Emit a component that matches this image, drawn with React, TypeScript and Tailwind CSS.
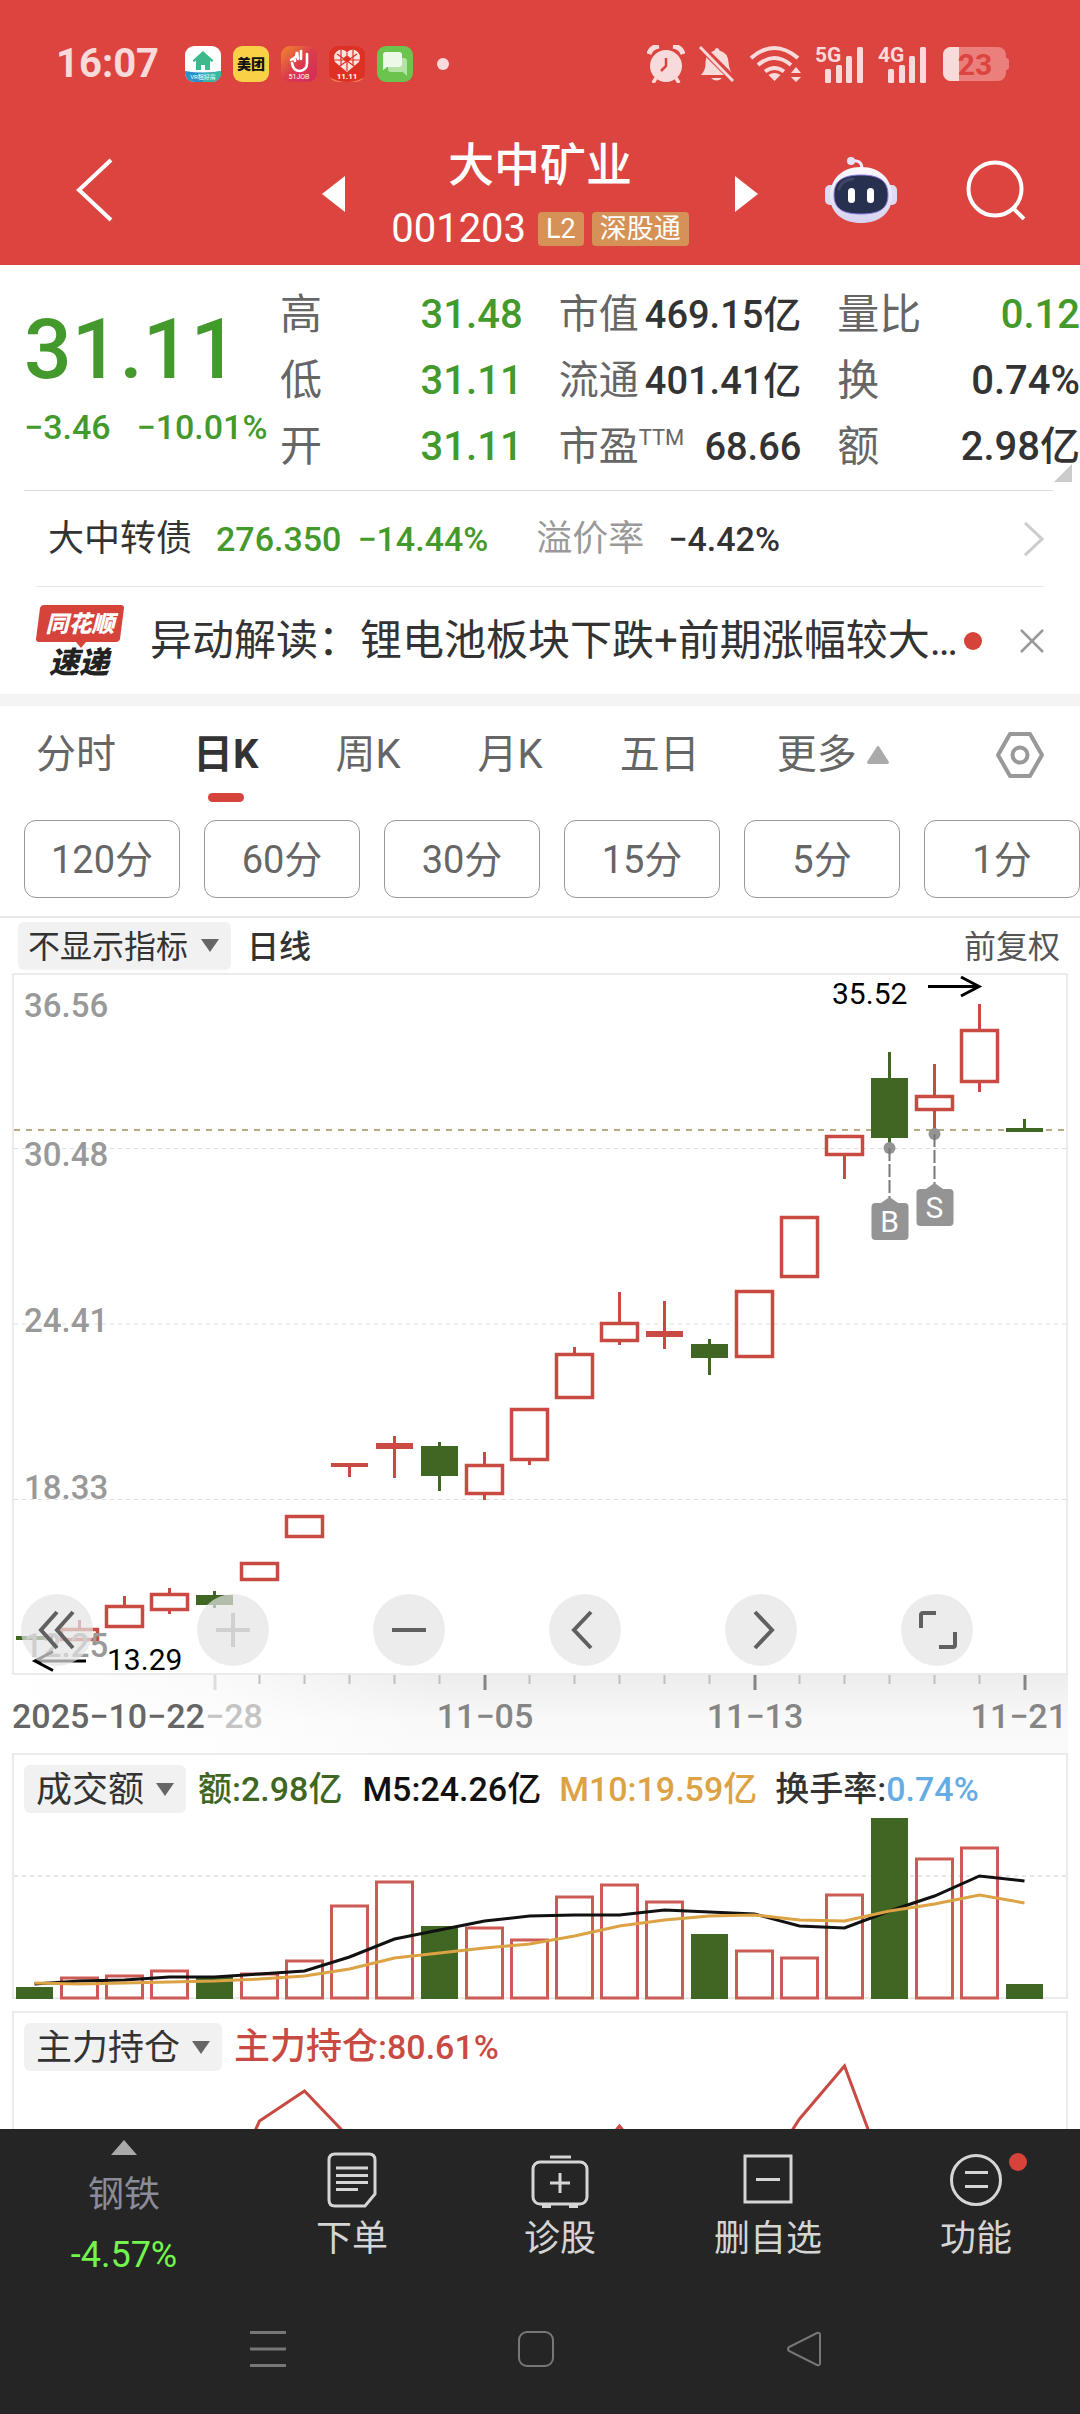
import { ReactNode } from "react";

interface Candle {
  high: number;
  top: number;
  bottom: number;
  low: number;
  up: boolean;
}

const RED = "#c94a42";
const GREEN = "#3f6623";

const STEP = 45;
const centerOf = (i: number) => 22.5 + i * STEP;

// [high, top, bottom, low, up]
const rawCandles: [number, number, number, number, boolean][] = [
  [663, 663, 667, 667, false],
  [647, 655, 668, 668, true],
  [623, 632, 655, 655, true],
  [615, 620, 638, 641, true],
  [618, 622, 632, 635, false],
  [589, 589, 608, 608, true],
  [542, 542, 565, 565, true],
  [490, 490, 494, 504, true],
  [463, 470, 476, 505, true],
  [469, 473, 503, 518, false],
  [479, 491, 522, 527, true],
  [435, 435, 488, 492, true],
  [374, 380, 426, 426, true],
  [319, 349, 369, 372, true],
  [328, 358, 364, 376, true],
  [366, 371, 385, 402, false],
  [317, 317, 385, 385, true],
  [243, 243, 305, 305, true],
  [162, 162, 183, 206, true],
  [79, 105, 165, 174, false],
  [91, 122, 138, 161, true],
  [31, 56, 110, 119, true],
  [146, 155, 159, 159, false],
];

const candles: Candle[] = rawCandles.map(([high, top, bottom, low, up]) => ({ high, top, bottom, low, up }));

const volumeTops = [174, 164, 162, 157, 164, 160, 147, 92, 68, 113, 114, 126, 83, 71, 88, 121, 137, 144, 81, 5, 45, 34, 171];
const ma5 = [171, 168, 167, 164, 164, 161, 158, 144, 126, 117, 108, 103, 102, 102, 97, 99, 101, 113, 115, 98, 83, 63, 68];
const ma10 = [170, 171, 170, 169, 168, 166, 163, 156, 145, 140, 135, 131, 123, 113, 107, 103, 102, 107, 108, 98, 91, 82, 90];
const holding = [160, 160, 160, 160, 150, 50, 20, 67, 110, 130, 140, 130, 110, 55, 110, 140, 117, 48, -5, 116, 140, 150, 150];

const toPoints = (values: number[]) => values.map((v, i) => `${centerOf(i)},${v}`).join(" ");

const priceLabels = [
  { text: "36.56", y: 44 },
  { text: "30.48", y: 193 },
  { text: "24.41", y: 359 },
  { text: "18.33", y: 526 },
  { text: "12.25", y: 684 },
];

const periods = ["120分", "60分", "30分", "15分", "5分", "1分"];

/* Status bar */

const SignalBars = ({ label }: { label: string }) => (
  <svg viewBox="0 0 48 38" className="w-12 h-[38px] overflow-visible" fill="#f8dada">
    <text x="0" y="17" fontSize="21" fontWeight="700">{label}</text>
    <rect x="10" y="24" width="6" height="14" rx="1.5" />
    <rect x="21" y="20" width="6" height="18" rx="1.5" />
    <rect x="31" y="11" width="6" height="27" rx="1.5" />
    <rect x="42" y="2" width="6" height="36" rx="1.5" />
  </svg>
);

const StatusBar = () => (
  <div className="flex h-[128px] items-center pl-14 pr-[71px] text-[#f8dada]">
    <span className="text-[40px] font-bold">16:07</span>
    <div className="ml-[26px] flex items-center gap-3">
      <svg viewBox="0 0 36 36" className="size-9 overflow-visible">
        <clipPath id="house"><rect width="36" height="36" rx="9" /></clipPath>
        <g clipPath="url(#house)">
          <rect width="36" height="36" fill="#fff" />
          <path d="M0 25q18 3 36 0v11H0z" fill="#2f8fc4" />
          <path d="M18 27q10 0 18-2v11H18z" fill="#37b8a5" />
          <path d="M18 5 7.500 14.500l1.500 1.500 2-1.500V24h14v-9.500l2 1.500 1.500-1.500z" fill="#3dba8c" />
          <path d="M16 19h4v5h-4z" fill="#fff" />
        </g>
        <text x="18" y="33" fontSize="6" fill="#fff" textAnchor="middle">VR租好房</text>
      </svg>
      <svg viewBox="0 0 36 36" className="size-9 overflow-visible">
        <rect width="36" height="36" rx="9" fill="#f8d147" />
        <text x="18" y="23" fontSize="14" fontWeight="900" fill="#111" textAnchor="middle">美团</text>
      </svg>
      <svg viewBox="0 0 36 36" className="size-9 overflow-visible">
        <linearGradient id="job" x1="0" y1="0" x2="1" y2="1">
          <stop offset="0" stopColor="#f08a2c" />
          <stop offset=".5" stopColor="#dc3c4c" />
          <stop offset="1" stopColor="#d02c5c" />
        </linearGradient>
        <rect width="36" height="36" rx="9" fill="url(#job)" />
        <path d="M11 17q1 8 8 8 7-1 7-8V8M10 14l3-2 1 3M15 11l1-5 1 7M20 5v8" fill="none" stroke="#fff" strokeWidth="2.600" strokeLinecap="round" />
        <text x="18" y="33" fontSize="7" fill="#fff" textAnchor="middle">51JOB</text>
      </svg>
      <svg viewBox="0 0 36 36" className="size-9 overflow-visible">
        <clipPath id="heart"><rect width="36" height="36" rx="9" /></clipPath>
        <g clipPath="url(#heart)">
          <rect width="36" height="36" fill="#de3024" />
          <path d="M0 31q18 10 36 0v5H0z" fill="#f08050" />
          <path d="M18 26 6 16Q3 7 10 4q6-1 8 3 2-4 8-3 7 3 4 12z" fill="#fbe4e0" />
          <path d="m8 8 20 14M28 8 8 22M18 7v18M6 14h24M12 4v16M24 4v16" stroke="#de3024" strokeWidth="1.200" />
          <circle cx="18" cy="13" r="3" fill="#de3024" />
        </g>
        <text x="18" y="33" fontSize="8" fontWeight="700" fill="#fff" textAnchor="middle">11.11</text>
      </svg>
      <svg viewBox="0 0 36 36" className="size-9">
        <rect width="36" height="36" rx="9" fill="#6cc44f" />
        <path d="M14 12h13q3 0 3 3v15l-4-4H14q-3 0-3-3v-8q0-3 3-3z" fill="#b5e2a5" />
        <path d="M9 6h13q3 0 3 3v9q0 3-3 3H10l-4 3V9q0-3 3-3z" fill="#edf9e8" />
      </svg>
    </div>
    <span className="ml-6 size-3 rounded-full bg-[#f8dada]" />
    <div className="ml-auto flex items-center">
      <svg viewBox="0 0 38 38" className="size-[38px]">
        <circle cx="19" cy="21" r="16" fill="#f8dada" />
        <path d="M2 9q2-7 10-8M36 9q-2-7-10-8" stroke="#f8dada" strokeWidth="5" fill="none" />
        <path d="m9 33-3 5M29 33l3 5" stroke="#f8dada" strokeWidth="3.500" />
        <path d="M19 13v8l-5 5" stroke="#dc4440" strokeWidth="2.500" fill="none" />
      </svg>
      <svg viewBox="0 0 36 38" className="ml-3.5 h-[38px] w-9">
        <path d="M18 3q2 0 2.500 2.500Q29 8 29.500 17q.5 8 4.500 13H2q5-5 4.500-13Q7 8 15.500 5.500 16 3 18 3z" fill="#f8dada" />
        <path d="M12 33h11q-5.500 5-11 0z" fill="#f8dada" />
        <path d="M0 0 37 37" stroke="#dc4440" strokeWidth="7" />
        <path d="m1 2 33 34" stroke="#f8dada" strokeWidth="3" />
      </svg>
      <svg viewBox="0 0 54 38" className="ml-3.5 h-[38px] w-[54px]" fill="none" stroke="#f8dada" strokeWidth="4">
        <path d="M2 13q23-20 47 0M9 20q16.500-14 33 0M16 26.500q9.500-7 19 0" />
        <path d="m25.500 36-6-6q6-4 12 0z" fill="#f8dada" stroke="none" />
        <path d="m47 22 5 6H42zM47 37l5-5H42z" fill="#f8dada" stroke="none" />
      </svg>
      <div className="ml-3 flex gap-[15px]">
        <SignalBars label="5G" />
        <SignalBars label="4G" />
      </div>
      <svg viewBox="0 0 66 34" className="ml-[17px] h-[34px] w-[66px] overflow-visible">
        <clipPath id="battery"><rect width="63" height="34" rx="8" /></clipPath>
        <g clipPath="url(#battery)">
          <rect width="63" height="34" fill="#ea7f7c" />
          <rect width="16" height="34" fill="#f8dada" />
        </g>
        <path d="M63 11q3 0 3 3v6q0 3-3 3z" fill="#ea7f7c" />
        <text x="32" y="28" fontSize="30" fontWeight="700" fill="#dc4440" textAnchor="middle">23</text>
      </svg>
    </div>
  </div>
);

/* Title */

const TitleBar = () => (
  <div className="grid h-[137px] grid-cols-[1fr_436px_1fr] items-center pb-[5px]">
    <div className="pb-2 pl-[76px]">
      <button aria-label="返回" className="block">
        <svg viewBox="0 0 37 64" className="h-16 w-[37px]" fill="none" stroke="#fff" strokeWidth="4">
          <path d="M35 2 3 32l32 30" />
        </svg>
      </button>
    </div>
    <div className="flex items-center justify-between">
      <button aria-label="上一只">
        <svg viewBox="0 0 23 36" className="h-9 w-[23px]"><path d="M23 0v36L0 18z" fill="#fff" /></svg>
      </button>
      <div className="flex flex-col items-center gap-6">
        <h1 className="text-[46px] font-medium">大中矿业</h1>
        <div className="flex h-[34px] items-center">
          <span className="text-[40px]">001203</span>
          <span className="ml-3 flex h-[34px] items-center rounded-sm bg-[#d69256] px-2 text-[27px]">L2</span>
          <span className="ml-2 flex h-[34px] items-center rounded-sm bg-[#d69256] px-2 text-[27px]">深股通</span>
        </div>
      </div>
      <button aria-label="下一只">
        <svg viewBox="0 0 23 36" className="h-9 w-[23px]"><path d="M0 0v36l23-18z" fill="#fff" /></svg>
      </button>
    </div>
    <div className="flex items-center justify-between pb-2 pl-[67px] pr-[54px]">
      <button aria-label="助手">
        <svg viewBox="0 0 72 68" className="h-[68px] w-[72px]">
          <linearGradient id="shell" x1="0" y1="0" x2="0" y2="1">
            <stop offset="0" stopColor="#fbfaff" />
            <stop offset="1" stopColor="#d6d2f0" />
          </linearGradient>
          <path d="M26 5q11-2 11 8" fill="none" stroke="#ece9fa" strokeWidth="3" />
          <circle cx="26" cy="5" r="4" fill="#e6e3f6" />
          <rect x="0" y="29" width="12" height="20" rx="5" fill="#dedaf4" />
          <rect x="60" y="29" width="12" height="20" rx="5" fill="#dedaf4" />
          <path d="M36 11c20 0 31 13 31 29 0 17-13 27-31 27S5 57 5 40c0-16 11-29 31-29z" fill="url(#shell)" />
          <path d="M36 19c20 0 27 7 27 20 0 14-9 19-27 19S9 53 9 39c0-13 7-20 27-20z" fill="#28304f" stroke="#8f7be0" strokeWidth="1" />
          <path d="M14 33q2-9 14-10" fill="none" stroke="#3e4668" strokeWidth="3" strokeLinecap="round" />
          <rect x="23" y="32" width="7" height="15" rx="3.500" fill="#fff" />
          <rect x="42" y="32" width="7" height="15" rx="3.500" fill="#fff" />
        </svg>
      </button>
      <button aria-label="搜索">
        <svg viewBox="0 0 60 60" className="size-[60px]" fill="none" stroke="#fff" strokeWidth="4">
          <circle cx="29" cy="29" r="26.500" />
          <path d="m46 47 12 12" />
        </svg>
      </button>
    </div>
  </div>
);

/* Quote */

interface QuoteItemProps {
  label: ReactNode;
  value: string;
  labelClass?: string;
  valueClass?: string;
}

const QuoteItem = ({ label, value, labelClass = "text-[42px]", valueClass = "text-[40px] text-[#333]" }: QuoteItemProps) => (
  <div className="flex h-[66px] items-center justify-between whitespace-nowrap">
    <dt className={`flex text-[#666] ${labelClass}`}>{label}</dt>
    <dd className={`font-medium ${valueClass}`}>{value}</dd>
  </div>
);

const Quote = () => {
  const green = "text-[40px] text-[#43992b]";
  const mid = "text-[38px] text-[#333]";
  return (
    <section className="relative flex pb-2.5 pt-[17px]">
      <div className="w-[280px] shrink-0 pl-6 pt-[26px] font-medium text-[#43992b]">
        <div className="text-[84px]">31.11</div>
        <div className="mt-[18px] flex gap-[26px] whitespace-nowrap text-[34px]">
          <span>−3.46</span>
          <span>−10.01%</span>
        </div>
      </div>
      <dl className="grid flex-1 grid-flow-col grid-cols-3 grid-rows-3 gap-x-9">
        <QuoteItem label="高" value="31.48" valueClass={green} />
        <QuoteItem label="低" value="31.11" valueClass={green} />
        <QuoteItem label="开" value="31.11" valueClass={green} />
        <QuoteItem label="市值" value="469.15亿" labelClass="text-[40px]" valueClass={mid} />
        <QuoteItem label="流通" value="401.41亿" labelClass="text-[40px]" valueClass={mid} />
        <QuoteItem label={<>市盈<span className="text-[22px]">TTM</span></>} value="68.66" labelClass="text-[40px]" valueClass={mid} />
        <QuoteItem label="量比" value="0.12" valueClass={green} />
        <QuoteItem label="换" value="0.74%" />
        <QuoteItem label="额" value="2.98亿" />
      </dl>
      <svg viewBox="0 0 18 18" className="absolute bottom-2 right-2 size-[18px]"><path d="M18 0v18H0z" fill="#ccc" /></svg>
    </section>
  );
};

const BondRow = () => (
  <a href="#bond" className="mx-9 flex h-24 items-center border-b border-[#e8e8e8] pl-3 text-[#333]">
    <span className="text-[36px]">大中转债</span>
    <span className="ml-6 text-[34px] font-medium text-[#43992b]">276.350</span>
    <span className="ml-4 text-[34px] font-medium text-[#43992b]">−14.44%</span>
    <span className="ml-12 text-[36px] text-[#999]">溢价率</span>
    <span className="ml-6 text-[34px] font-medium">−4.42%</span>
    <svg viewBox="0 0 21 34" className="ml-auto h-[34px] w-[21px]" fill="none" stroke="#ccc" strokeWidth="3">
      <path d="m2 1 17 16L2 33" />
    </svg>
  </a>
);

const NewsRow = () => (
  <div className="mx-9 flex h-[107px] items-center whitespace-nowrap text-[#333]">
    <svg viewBox="0 0 88 72" className="h-[72px] w-[88px] shrink-0 overflow-visible">
      <path d="M8 0h77q3 0 3 3l-4 31q-1 3-4 3H50l-5 6-5-6H3q-3 0-3-3L4 3q1-3 4-3z" fill="#d5433b" />
      <text x="44" y="27" fontSize="23" fontWeight="900" fontStyle="italic" fill="#fff" textAnchor="middle">同花顺</text>
      <text x="43" y="68" fontSize="30" fontWeight="900" fontStyle="italic" fill="#222" textAnchor="middle">速递</text>
    </svg>
    <a href="#news" className="ml-[26px] text-[42px]">异动解读：锂电池板块下跌+前期涨幅较大…</a>
    <span className="ml-1.5 size-[18px] shrink-0 rounded-full bg-[#d5433b]" />
    <button aria-label="关闭" className="ml-auto">
      <svg viewBox="0 0 24 24" className="size-6" stroke="#999" strokeWidth="2.500"><path d="m1 1 22 22M23 1 1 23" /></svg>
    </button>
  </div>
);

/* Period tabs */

const tabs = ["分时", "日K", "周K", "月K", "五日"];

const PeriodTabs = () => (
  <nav className="border-t-[12px] border-[#f4f4f4]">
    <div className="flex gap-[77px] px-9 text-[40px] text-[#666]">
      {tabs.map((tab) => (
        <button key={tab} className={`relative h-[98px] ${tab === "日K" ? "font-bold text-[#333]" : ""}`}>
          {tab}
          {tab === "日K" && (
            <span className="absolute bottom-0.5 left-1/2 h-[9px] w-9 -translate-x-1/2 rounded-full bg-[#d5433b]" />
          )}
        </button>
      ))}
      <button className="flex h-[98px] items-center gap-2.5">
        更多
        <svg viewBox="0 0 22 18" className="h-[18px] w-[22px]"><path d="M11 0q1 0 2 2l9 14q0 2-2 2H2q-2 0-2-2L9 2q1-2 2-2z" fill="#aaa" /></svg>
      </button>
      <button aria-label="设置" className="ml-auto">
        <svg viewBox="0 0 48 46" className="h-[46px] w-12" fill="none" stroke="#999" strokeWidth="4" strokeLinejoin="round">
          <path d="M14 2h20l12 21-12 21H14L2 23z" />
          <circle cx="24" cy="23" r="7.500" />
        </svg>
      </button>
    </div>
    <div className="flex gap-6 border-b-2 border-[#e8e8e8] pb-[18px] pl-6 pt-4">
      {periods.map((p) => (
        <button key={p} className="h-[78px] flex-1 rounded-xl border border-[#999] pt-0.5 text-[38px] text-[#666]">{p}</button>
      ))}
    </div>
  </nav>
);

/* Charts */

interface PickerProps {
  id: string;
  label: string;
  value: string;
  className: string;
}

const Picker = ({ id, label, value, className }: PickerProps) => (
  <div className="relative flex h-12 items-center rounded-md bg-[#f1f1f1]">
    <label htmlFor={id} className="sr-only">{label}</label>
    <select id={id} className={`h-12 appearance-none pt-0.5 text-[#333] outline-none ${className}`}>
      <option>{value}</option>
    </select>
    <svg viewBox="0 0 18 13" className="pointer-events-none absolute right-3 h-[13px] w-[18px]"><path d="M0 0h18L9 13z" fill="#666" /></svg>
  </div>
);

const CandleShape = ({ candle, index }: { candle: Candle; index: number }) => {
  const { high, top, bottom, low, up } = candle;
  const cx = centerOf(index);
  const color = up ? RED : GREEN;
  const solid = !up || bottom - top < 8;
  return (
    <g stroke={color} strokeWidth="3">
      {high < top && <line x1={cx} x2={cx} y1={high} y2={top} />}
      {low > bottom && <line x1={cx} x2={cx} y1={bottom} y2={low} />}
      {solid ? (
        <rect x={cx - 18.5} y={top} width="37" height={bottom - top} fill={color} stroke="none" />
      ) : (
        <rect x={cx - 18} y={top + 1.5} width="36" height={bottom - top - 3} fill="none" strokeWidth="3.5" />
      )}
    </g>
  );
};

const TradeMark = ({ x, from, label }: { x: number; from: number; label: string }) => (
  <g>
    <circle cx={x} cy={from} r="6" fill="#949494" />
    <line x1={x} x2={x} y1={from} y2={from + 50} stroke="#777" strokeWidth="2" strokeDasharray="13 3" />
    <path d={`M${x - 10} ${from + 56}l10-7 10 7z`} fill="#949494" />
    <rect x={x - 18} y={from + 55} width="37" height="37" rx="4" fill="#949494" />
    <text x={x} y={from + 84} fontSize="30" fill="#fff" textAnchor="middle">{label}</text>
  </g>
);

const ToolButton = ({ label, dim, children }: { label: string; dim?: boolean; children: ReactNode }) => (
  <button aria-label={label} className="flex size-[72px] items-center justify-center rounded-full bg-[#e4e4e4]/70">
    <svg viewBox="0 0 40 40" className="size-10" fill="none" stroke={dim ? "#d0d0d0" : "#606060"} strokeWidth="4">
      {children}
    </svg>
  </button>
);

const KLineChart = () => (
  <div className="relative mx-3 border-2 border-[#ebebeb]">
    <svg viewBox="2 2 1052 698" className="block w-full overflow-visible">
      <g strokeDasharray="4 4" stroke="#dedede" strokeWidth="1">
        <line x1="2" x2="1054" y1="175.500" y2="175.500" />
        <line x1="2" x2="1054" y1="351" y2="351" />
        <line x1="2" x2="1054" y1="526.500" y2="526.500" />
      </g>
      <line x1="2" x2="1052" y1="157" y2="157" stroke="#b9aa80" strokeWidth="2" strokeDasharray="6 6" />
      {candles.map((c, i) => (
        <CandleShape key={i} candle={c} index={i} />
      ))}
      {priceLabels.map((l) => (
        <text key={l.text} x="12" y={l.y} fontSize="33" fontWeight="500" fill="#999">{l.text}</text>
      ))}
      <TradeMark x={centerOf(19)} from={175} label="B" />
      <TradeMark x={centerOf(20)} from={161} label="S" />
      <text x="820" y="31" fontSize="30">35.52</text>
      <text x="95" y="697" fontSize="30">13.29</text>
      <g fill="none" stroke="#000" strokeWidth="3">
        <path d="M916 13.500h51M949 4l18 9.500-18 9.500" />
        <path d="M74 688H23M41 678.500 23 688l18 9.500" />
      </g>
    </svg>
    <div className="absolute inset-x-0 bottom-[7px] flex justify-between pl-[7px] pr-[93px]">
      <ToolButton label="最早"><path d="M20 2 4 20l16 18M36 2 20 20l16 18" /></ToolButton>
      <ToolButton label="放大" dim><path d="M3 20h34M20 3v34" /></ToolButton>
      <ToolButton label="缩小"><path d="M3 20h34" /></ToolButton>
      <ToolButton label="左移"><path d="M26 2 9 20l17 18" /></ToolButton>
      <ToolButton label="右移"><path d="m14 2 17 18-17 18" /></ToolButton>
      <ToolButton label="全屏"><path d="M4 18V5q0-2 2-2h13M38 22v13q0 2-2 2H22" /></ToolButton>
    </div>
  </div>
);

const TimeAxis = () => (
  <svg viewBox="0 0 1056 78" className="mx-3 block w-[calc(100%-24px)]" fontSize="34" fontWeight="500" fill="#858585">
    <linearGradient id="axis-down" x1="0" y1="0" x2="0" y2="1">
      <stop offset="0" stopColor="#ededed" />
      <stop offset=".6" stopColor="#f9f9f9" />
      <stop offset="1" stopColor="#fafafa" />
    </linearGradient>
    <linearGradient id="axis-left">
      <stop offset="0" stopColor="#fff" />
      <stop offset=".5" stopColor="#fff" stopOpacity=".7" />
      <stop offset="1" stopColor="#fff" stopOpacity="0" />
    </linearGradient>
    <rect width="1056" height="78" fill="url(#axis-down)" />
    <rect width="420" height="78" fill="url(#axis-left)" />
    {candles.map((_, i) => {
      if (i < 4) return null;
      const major = i % 6 === 4;
      const color = i === 4 ? "#ddd" : major ? "#858585" : "#c0c0c0";
      return <rect key={i} x={centerOf(i) - 1} y="0" width={major ? 3 : 2} height={major ? 15 : 9} fill={color} />;
    })}
    <text x="0" y="53" fill="#666">2025−10−22</text>
    <text x="193" y="53" fill="#c4c4c4">−28</text>
    <text x="473" y="53" textAnchor="middle">11−05</text>
    <text x="743" y="53" textAnchor="middle">11−13</text>
    <text x="1055" y="53" textAnchor="end">11−21</text>
  </svg>
);

const VolumeChart = () => (
  <section className="mx-3 border-2 border-[#ebebeb] pt-2.5">
    <div className="flex items-center whitespace-nowrap pl-2.5 text-[34px] font-medium">
      <Picker id="volume" label="副图指标" value="成交额" className="w-[162px] pl-3 text-[36px] font-normal" />
      <span className="ml-3 text-[#3f6623]">额:2.98亿</span>
      <span className="ml-5 text-[#111]">M5:24.26亿</span>
      <span className="ml-[18px] text-[#dca244]">M10:19.59亿</span>
      <span className="ml-[18px] text-[#333]">换手率:</span>
      <span className="text-[#65ace4]">0.74%</span>
    </div>
    <svg viewBox="2 0 1052 184" className="block w-full overflow-visible" fill="none">
      <line x1="2" x2="1054" y1="63" y2="63" stroke="#e6e6e6" strokeWidth="2" strokeDasharray="4 4" />
      {volumeTops.map((top, i) => {
        const cx = centerOf(i);
        return candles[i].up ? (
          <rect key={i} x={cx - 18} y={top + 1} width="36" height={185 - top - 1} stroke="#cb5b54" strokeWidth="3" />
        ) : (
          <rect key={i} x={cx - 18.5} y={top} width="37" height={186 - top} fill={GREEN} />
        );
      })}
      <polyline points={toPoints(ma5)} stroke="#111" strokeWidth="3" />
      <polyline points={toPoints(ma10)} stroke="#dca244" strokeWidth="3" />
    </svg>
  </section>
);

const HoldingChart = () => (
  <section className="mx-3 mt-3 border-2 border-[#ebebeb] pt-2.5">
    <div className="flex items-center whitespace-nowrap pl-2.5 text-[34px] font-medium text-[#c94a42]">
      <Picker id="holding" label="副图指标" value="主力持仓" className="w-[198px] pl-3 text-[36px] font-normal" />
      <span className="ml-3 text-[36px]">主力持仓</span>
      <span>:80.61%</span>
    </div>
    <svg viewBox="2 0 1052 184" className="block w-full overflow-visible" fill="none">
      <polyline points={toPoints(holding)} stroke={RED} strokeWidth="3" />
    </svg>
  </section>
);

/* Bottom bar */

const BarItem = ({ label, dot, children }: { label: string; dot?: boolean; children: ReactNode }) => (
  <button className="relative flex w-[208px] flex-col items-center pt-[22px] text-[36px] text-[#d5d5d5]">
    <svg viewBox="0 0 58 58" className="size-[58px]" fill="none" stroke="#d5d5d5" strokeWidth="3">
      {children}
    </svg>
    <span className="mt-3">{label}</span>
    {dot && <span className="absolute right-[53px] top-6 size-[18px] rounded-full bg-[#d5433b]" />}
  </button>
);

const BottomBar = () => (
  <footer className="bg-[#252525]">
    <div className="flex h-[172px]">
      <button className="flex flex-1 flex-col items-center pt-[11px] text-[36px]">
        <svg viewBox="0 0 26 15" className="h-[15px] w-[26px]"><path d="M13 0 26 15H0z" fill="#aaa" /></svg>
        <span className="mt-[22px] text-[#8b8b99]">钢铁</span>
        <span className="mt-6 text-[#72f64c]">-4.57%</span>
      </button>
      <BarItem label="下单">
        <path d="M12 3h34q6 0 6 6v34L42 55H12q-6 0-6-6V9q0-6 6-6z" />
        <path d="M13 17h32M13 24.500h32M13 31.500h32M13 38.500h22" />
      </BarItem>
      <BarItem label="诊股">
        <rect x="2" y="11" width="54" height="42" rx="7" />
        <path d="M19 6h21M29 22v20M19 32h20" />
        <path d="M11 55h9M38 55h9" strokeWidth="4" />
      </BarItem>
      <BarItem label="删自选">
        <rect x="6" y="5" width="46" height="46" />
        <path d="M17 28.500h24" />
      </BarItem>
      <BarItem label="功能" dot>
        <circle cx="29" cy="29" r="24.500" />
        <path d="M18 21.500h23M18 35.500h23" />
      </BarItem>
    </div>
    <div className="grid h-[113px] grid-cols-3 pb-[18px] pl-[134px] pr-[142px]">
      <button aria-label="最近任务" className="flex items-center justify-center">
        <svg viewBox="0 0 36 36" className="size-9" stroke="#777" strokeWidth="3"><path d="M0 1.500h36M0 18h36M0 34.500h36" /></svg>
      </button>
      <button aria-label="主屏幕" className="flex items-center justify-center">
        <svg viewBox="0 0 36 36" className="size-9" fill="none" stroke="#777" strokeWidth="2"><rect x="1" y="1" width="34" height="34" rx="8" /></svg>
      </button>
      <button aria-label="返回上一页" className="flex items-center justify-center">
        <svg viewBox="0 0 36 36" className="size-9" fill="none" stroke="#777" strokeWidth="2"><path d="M31 2 3 16q-2 2 0 4l28 14q3 1 3-2V4q0-3-3-2z" /></svg>
      </button>
    </div>
  </footer>
);

const App = () => (
  <div className="flex h-screen flex-col overflow-hidden bg-white font-['Roboto','Noto_Sans_CJK_SC',sans-serif] leading-none">
    <header className="bg-[#dc4440] text-white">
      <StatusBar />
      <TitleBar />
    </header>
    <main className="min-h-0 flex-1 overflow-hidden">
      <Quote />
      <div className="ml-6 mr-[27px] h-px bg-[#dcdcdc]" />
      <BondRow />
      <NewsRow />
      <PeriodTabs />
      <div className="flex h-[55px] items-center pl-[18px] pr-5 text-[32px] text-[#333]">
        <Picker id="indicator" label="主图指标" value="不显示指标" className="w-[213px] pl-2.5 text-[32px]" />
        <span className="ml-4 pt-0.5 font-medium">日线</span>
        <button className="ml-auto pt-0.5 text-[#555]">前复权</button>
      </div>
      <KLineChart />
      <TimeAxis />
      <VolumeChart />
      <HoldingChart />
    </main>
    <BottomBar />
  </div>
);

export default App;
